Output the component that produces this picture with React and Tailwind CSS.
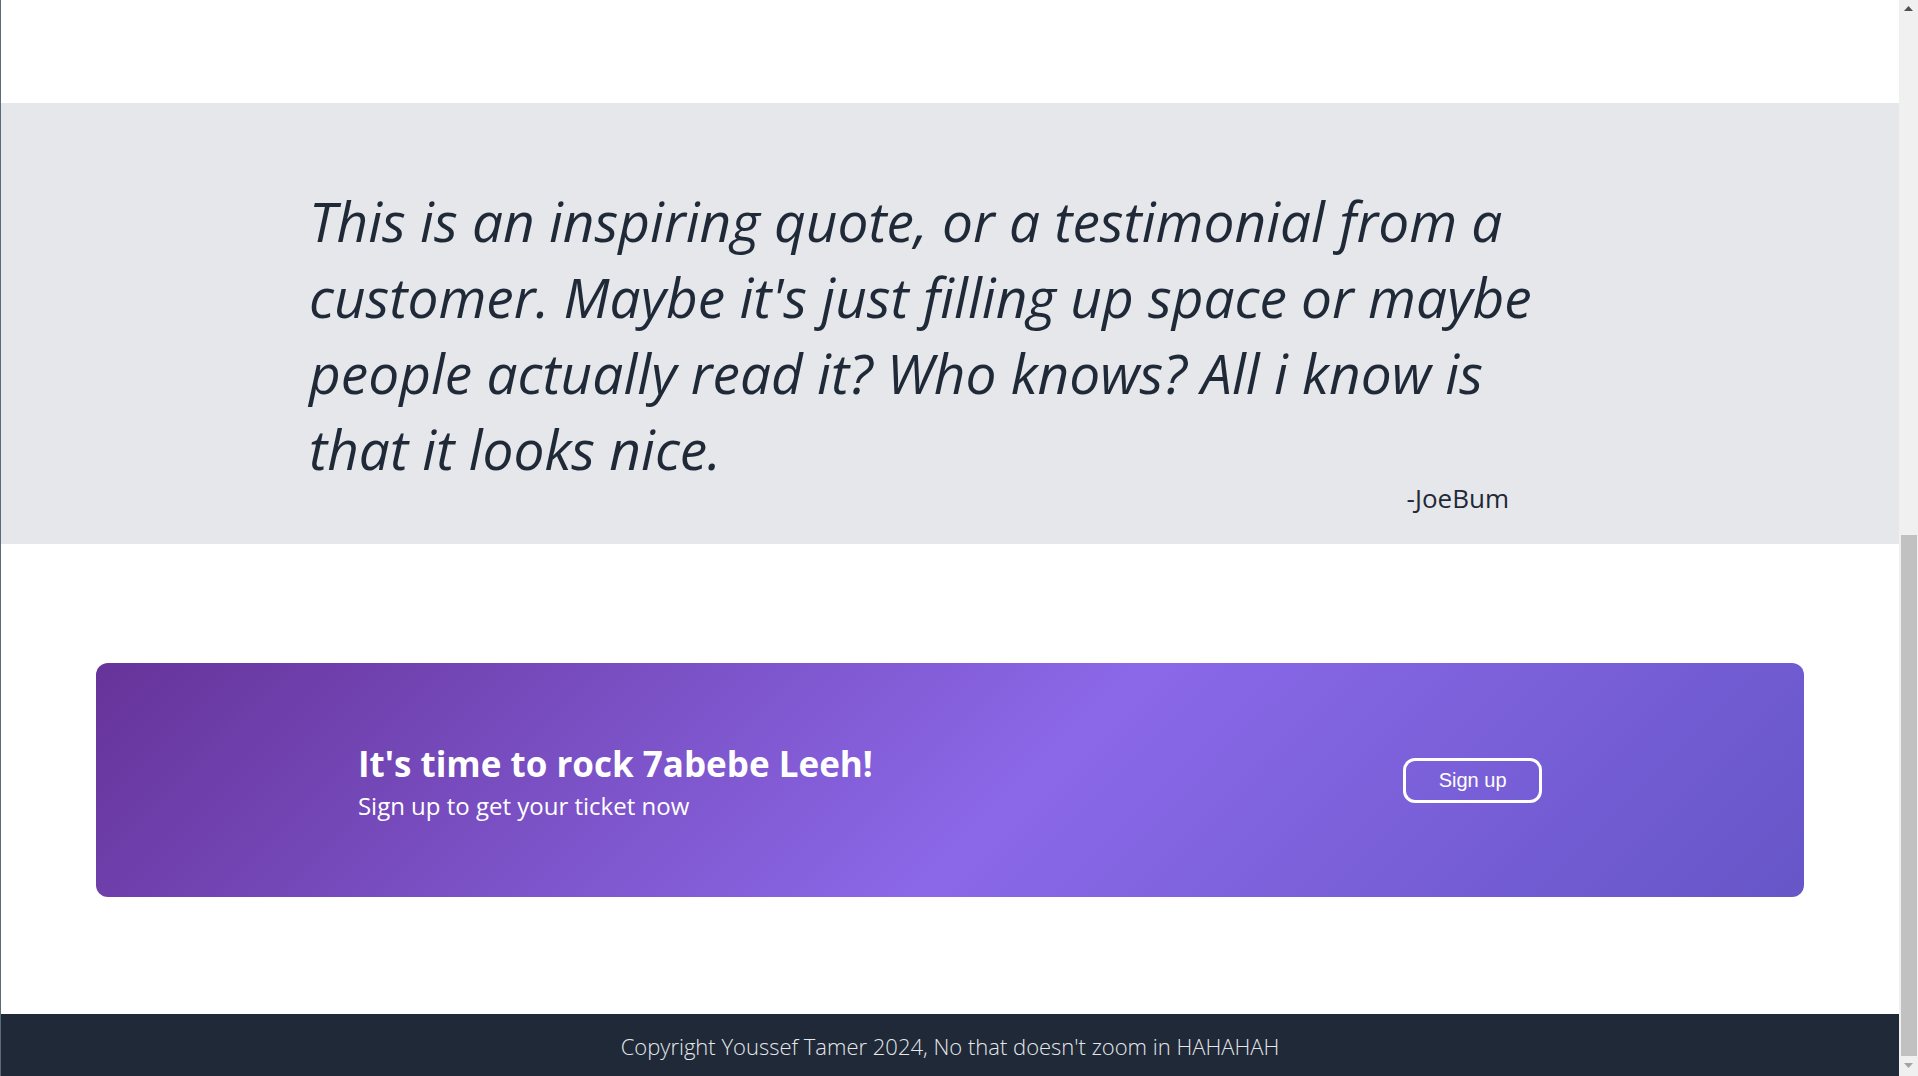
export default function App() {
  return (
    <div className="flex h-[1076px] w-full overflow-hidden bg-white" style={{ fontFamily: '"Open Sans", "Noto Sans", sans-serif' }}>
      <div className="w-px shrink-0 bg-[#5b6b7a]" />

      <div className="flex min-w-0 flex-1 flex-col">
        <div className="h-[103px] shrink-0 bg-white" />

        <section className="h-[441px] shrink-0 bg-[#e5e7eb] pt-[80px] text-[#1f2937]">
          <div className="mx-auto w-[1282px]">
            <p className="whitespace-nowrap text-[55px] leading-[76px] italic">
              This is an inspiring quote, or a testimonial from a
              <br />
              customer. Maybe it's just filling up space or maybe
              <br />
              people actually read it? Who knows? All i know is
              <br />
              that it looks nice.
            </p>
            <div className="mt-[-5px] flex justify-end pr-[82px]">
              <span className="text-[26px] leading-[32px]">-JoeBum</span>
            </div>
          </div>
        </section>

        <section className="shrink-0 pt-[119px] pb-[117px]">
          <div className="mx-auto flex h-[234px] w-[90%] items-center justify-between rounded-xl bg-[linear-gradient(135deg,#663399_0%,#8b68e8_54%,#6656c8_100%)] px-[262px] text-white">
            <div className="pt-[8px]">
              <h2 className="text-[35px] font-bold leading-[40px]">It's time to rock 7abebe Leeh!</h2>
              <p className="mt-1 text-[24px] leading-[36px]">Sign up to get your ticket now</p>
            </div>
            <button className="h-[45px] w-[139px] rounded-xl border-[3px] border-white text-[20px] text-white" style={{ fontFamily: '"Liberation Sans", Arial, sans-serif' }}>
              Sign up
            </button>
          </div>
        </section>

        <footer className="flex-1 bg-[#1f2937] pt-4 text-center">
          <p className="text-[22px] font-light leading-[32px] text-gray-200">
            Copyright Youssef Tamer 2024, No that doesn't zoom in HAHAHAH
          </p>
        </footer>
      </div>

      <div className="flex w-[19px] shrink-0 flex-col bg-[#f0f0f0]">
        <div className="flex h-[17px] items-start justify-center pt-[6px]">
          <svg width="9" height="5" viewBox="0 0 9 5"><path d="M4.5 0L9 5H0z" fill="#505050" /></svg>
        </div>
        <div className="h-[518px]" />
        <div className="ml-[2px] mr-px h-[521px] bg-[#c1c1c1]" />
        <div className="flex flex-1 items-start justify-center pt-[7px]">
          <svg width="9" height="5" viewBox="0 0 9 5"><path d="M0 0H9L4.5 5z" fill="#a3a3a3" /></svg>
        </div>
      </div>
    </div>
  );
}
